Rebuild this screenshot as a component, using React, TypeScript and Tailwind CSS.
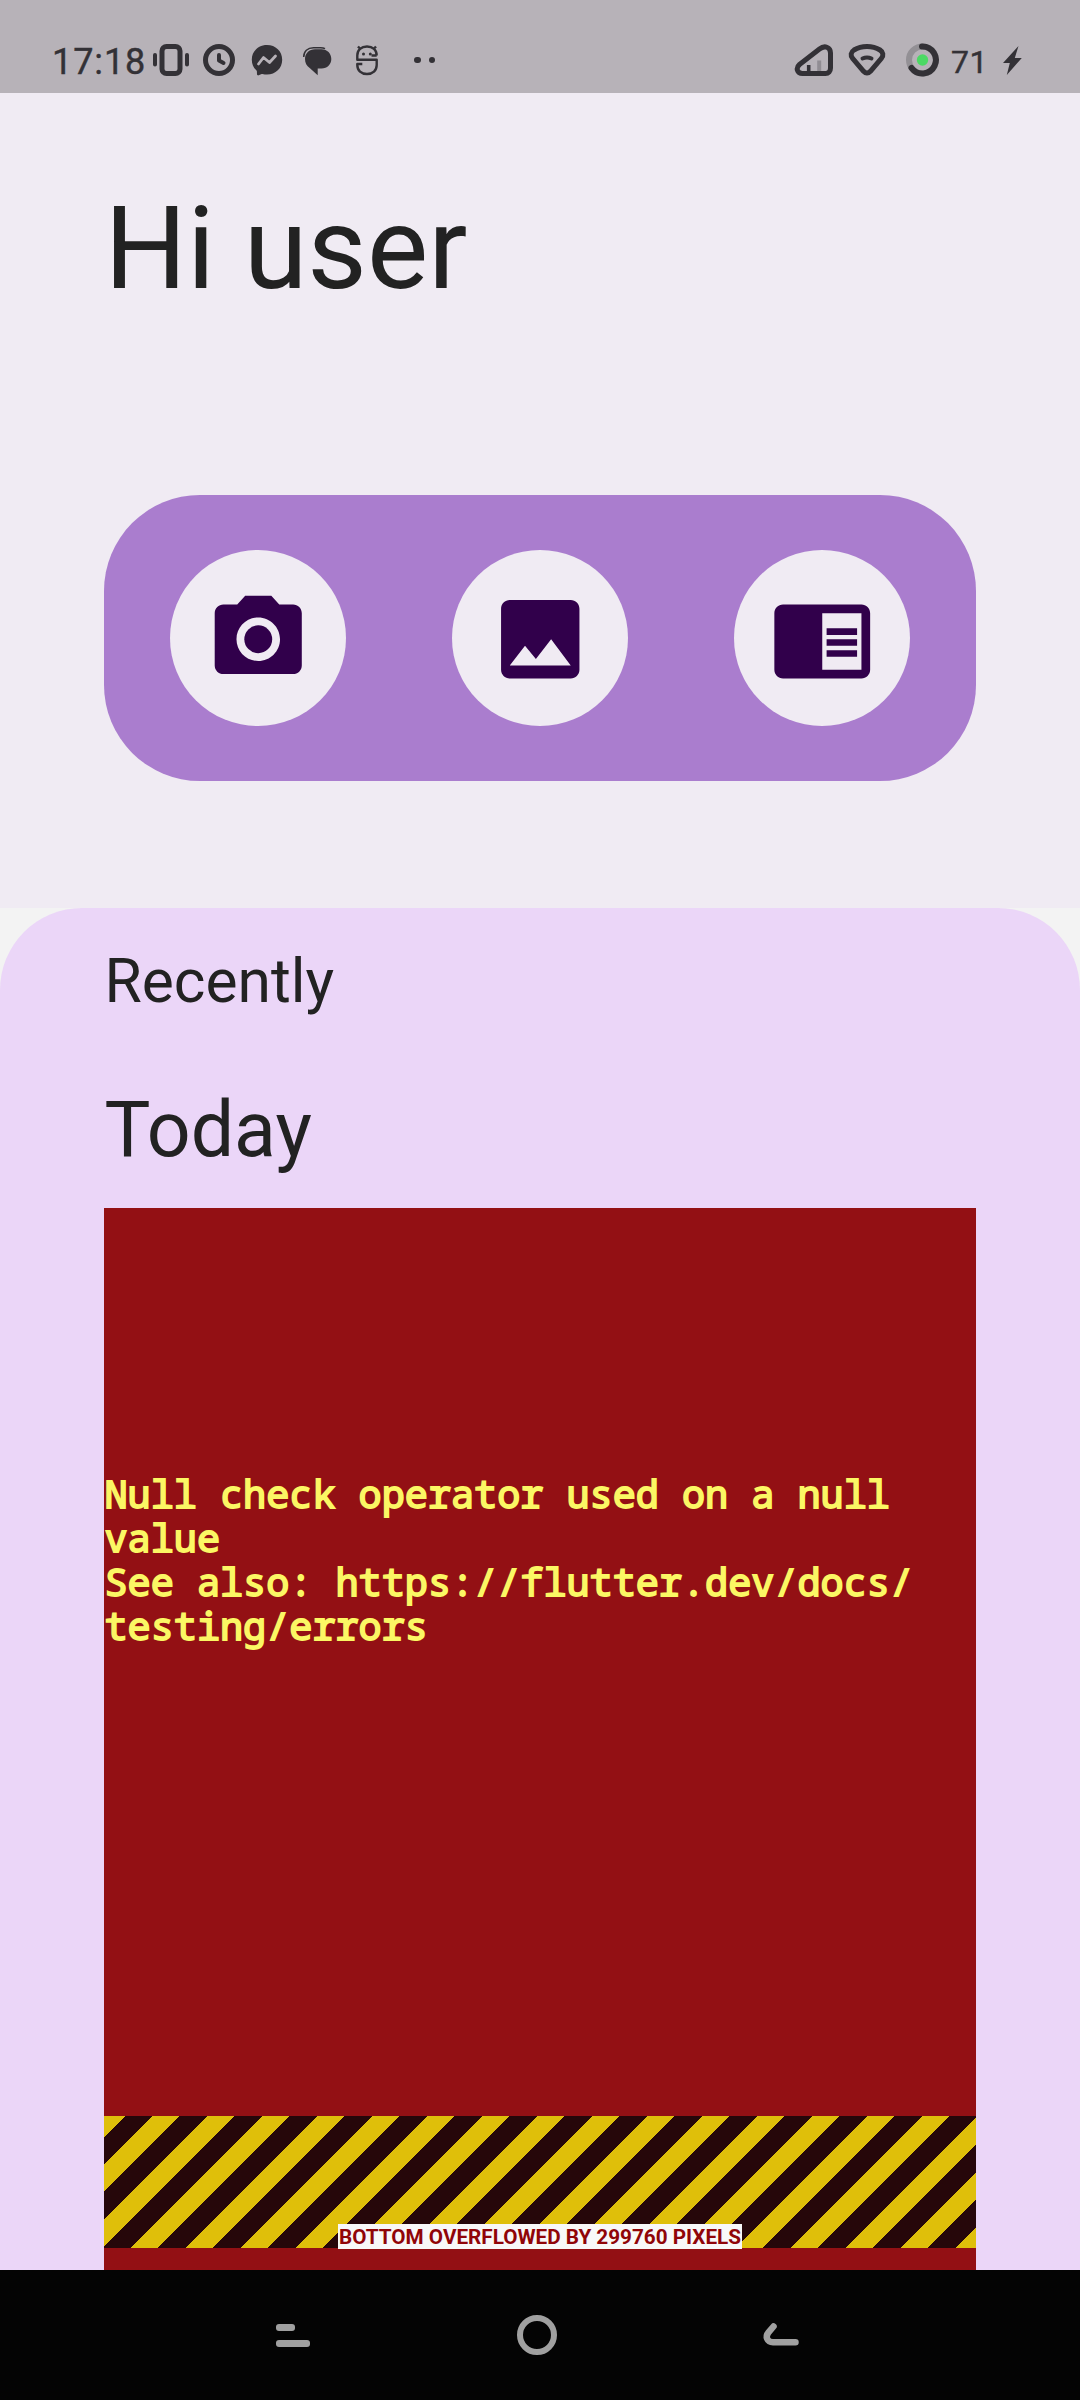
import type { ReactNode } from "react";

const INK = "#333136";

function LeftStatus() {
  return (
    <div className="flex h-[32px] items-center">
      <span className="w-[100px] whitespace-nowrap pt-[4px] text-[36px] font-normal leading-[32px] tracking-[0.900px] text-[#333136] [-webkit-text-stroke:0.400px_#333136]">17:18</span>
      {/* vibrate */}
      <svg className="h-[34px] w-[38px]" viewBox="152 43 38 34" fill="none" stroke={INK} strokeLinecap="round">
        <rect x="162" y="46.500" width="18" height="27" rx="4.500" strokeWidth="5" />
        <path d="M155 55v9.500M187 55v9.500" strokeWidth="4" />
      </svg>
      {/* clock */}
      <svg className="ml-[12px] h-[34px] w-[34px]" viewBox="202 43 34 34" fill="none" stroke={INK} strokeLinecap="round" strokeLinejoin="round">
        <circle cx="219" cy="60" r="13.500" strokeWidth="5" />
        <path d="M219 55v5.500l4.500 2.500" strokeWidth="4" />
      </svg>
      {/* messenger */}
      <svg className="ml-[15px] h-[34px] w-[32px]" viewBox="251 43 32 34">
        <path fill={INK} d="M267 45c-8.600 0-15.200 6.300-15.200 14.700 0 4.400 1.800 8.200 4.700 10.800.3.300.4.600.4 1l.1 2.700c0 .9.900 1.400 1.700 1.100l3-1.300c.3-.1.600-.1.800-.1 1.400.4 2.900.6 4.500.6 8.600 0 15.200-6.300 15.200-14.800S275.600 45 267 45z" />
        <path fill="none" stroke="#b7b2b8" strokeWidth="2.800" strokeLinejoin="round" strokeLinecap="round" d="M258.500 64l5-6.500 6 5 6-6.500" />
      </svg>
      {/* chat bubble */}
      <svg className="ml-[19px] h-[34px] w-[32px]" viewBox="302 43 32 34">
        <path fill={INK} d="M315 49.200h6.500c5.800 0 9.800 4.400 9.800 9.700s-4 9.500-9.800 9.500h-3.800v6.800l-8-7.300c-3-2-4.700-5-4.700-9 0-5.600 4.200-9.700 10-9.700z" />
        <path fill="none" stroke={INK} strokeWidth="1.500" d="M303.700 57c0-5.500 3.800-9.300 9.800-9.300h7c2 0 3.200.2 4.500 1" />
      </svg>
      {/* bugdroid S */}
      <svg className="ml-[21px] h-[34px] w-[24px]" viewBox="355 43 24 34" fill="none" stroke={INK} strokeWidth="2.400" strokeLinejoin="round">
        <path d="M376.700 55.500c0-5.500-4-9-9.700-9s-9.700 3.500-9.700 9v4.300h19.400v5.200c0 5.500-4 9-9.700 9s-9.700-3.500-9.700-9v-1h5M358 46.500l3 3.300M376 46.500l-3 3.300M371.500 55.500h5.200" />
        <circle cx="363.500" cy="54" r="1.500" fill={INK} stroke="none" />
        <circle cx="370.300" cy="54" r="1.500" fill={INK} stroke="none" />
      </svg>
      <div className="ml-[35px] flex gap-[8px]">
        <i className="size-[6.500px] rounded-full bg-[#333136]" />
        <i className="size-[6.500px] rounded-full bg-[#333136]" />
      </div>
    </div>
  );
}

function RightStatus() {
  return (
    <div className="flex h-[32px] items-center">
      {/* mobile signal */}
      <svg className="h-[34px] w-[40px]" viewBox="794 43 40 34" fill="none" strokeLinecap="round" strokeLinejoin="round">
        <path stroke={INK} strokeWidth="5" d="M799.500 64.500l20-15.500c5-4 11-2 11 4v15c0 3.500-2 5.500-5 5.500h-23c-5.500 0-7-5.500-3-9z" />
        <path stroke={INK} strokeWidth="3.600" strokeLinecap="butt" d="M808.700 65v9" />
        <path stroke="#918d93" strokeWidth="4" strokeLinecap="butt" d="M819.200 60.500V71" />
      </svg>
      {/* wifi */}
      <svg className="ml-[14px] h-[34px] w-[38px]" viewBox="848 43 38 34" fill="none" stroke={INK} strokeLinecap="round" strokeLinejoin="round">
        <path strokeWidth="5" d="M854 50c7.500-4.600 18.500-4.600 26 0 3.200 2 3.800 5.500 1.400 8.300l-11 13c-2.200 2.400-4.600 2.400-6.800 0l-11-13C850.200 55.500 850.800 52 854 50z" />
        <path strokeWidth="4" d="M862.500 58.500c3-1.400 6-1.400 9 0" />
      </svg>
      {/* battery ring */}
      <svg className="ml-[19px] h-[34px] w-[35px]" viewBox="905 43 35 34" fill="none">
        <circle cx="922.500" cy="60" r="13.500" stroke="#939095" strokeWidth="6" />
        <path stroke={INK} strokeWidth="6" strokeLinecap="round" d="M922 46.500a13.500 13.500 0 1 1-10.500 21.500" />
        <circle cx="922.500" cy="60" r="5.700" fill="#4cd964" />
      </svg>
      <span className="ml-[11px] w-[51px] whitespace-nowrap pt-[3px] text-[32px] leading-[32px] tracking-[0.600px] text-[#333136] [-webkit-text-stroke:0.400px_#333136]">71</span>
      <svg className="h-[34px] w-[20px]" viewBox="1002 43 20 34">
        <path fill={INK} d="M1018.500 46l-15.500 17h6.800l-3 12 15-17h-7z" />
      </svg>
    </div>
  );
}

function ActionButton({ children }: { children: ReactNode }) {
  return (
    <button className="flex size-[176px] items-center justify-center rounded-full bg-[#f0ebf3]">
      <svg className="ml-[1px] mt-[2px] size-[104.500px]" viewBox="0 0 24 24" fill="#31004b">
        {children}
      </svg>
    </button>
  );
}

export default function App() {
  return (
    <div className="flex h-[2400px] w-[1080px] flex-col overflow-hidden bg-[#f3f3f3] font-['Roboto',sans-serif] text-[#222222]">
      <header className="flex h-[93px] shrink-0 items-start justify-between bg-[#b7b2b8] pl-[52px] pr-[58px] pt-[44px]">
        <LeftStatus />
        <RightStatus />
      </header>

      <section className="flex h-[815px] shrink-0 flex-col bg-[#f0ebf3] px-[104px] pt-[88px]">
        <h1 className="h-[136px] pl-[0.500px] text-[115.500px] leading-[136px]">Hi user</h1>
        <div className="mt-[178px] flex h-[286px] items-center justify-between rounded-[96px] bg-[#aa7dce] pl-[66px] pr-[66.500px]">
          <ActionButton>
            <circle cx="12" cy="12" r="3.200" />
            <path d="M9 2 7.170 4H4c-1.100 0-2 .9-2 2v12c0 1.100.9 2 2 2h16c1.100 0 2-.9 2-2V6c0-1.100-.9-2-2-2h-3.170L15 2H9zm3 15c-2.760 0-5-2.240-5-5s2.240-5 5-5 5 2.240 5 5-2.240 5-5 5z" />
          </ActionButton>
          <ActionButton>
            <path d="M21 19V5c0-1.100-.9-2-2-2H5c-1.100 0-2 .9-2 2v14c0 1.100.9 2 2 2h14c1.100 0 2-.9 2-2zM5 18l3.500-4.500 2.500 3.010L14.500 12l4.500 6z" />
          </ActionButton>
          <ActionButton>
            <path d="M13 12h7v1.500h-7zm0-2.500h7V11h-7zm0 5h7V16h-7zM21 4H3c-1.100 0-2 .9-2 2v13c0 1.100.9 2 2 2h18c1.100 0 2-.9 2-2V6c0-1.100-.9-2-2-2zm0 15h-9V6h9v13z" />
          </ActionButton>
        </div>
      </section>

      <section className="flex h-[1362px] shrink-0 flex-col rounded-t-[82px] bg-[#ebd6f8] px-[104px]">
        <h2 className="mt-[38px] h-[72px] pl-[0.500px] text-[60.500px] leading-[72px]">Recently</h2>
        <h3 className="mt-[67px] h-[90px] pl-[0.500px] text-[77px] leading-[90px]">Today</h3>
        <div className="mt-[32.500px] flex flex-1 flex-col bg-[#931014]">
          <p className="mt-[263.500px] h-[176px] whitespace-pre pl-[0.500px] font-['Noto_Sans_Mono','DejaVu_Sans_Mono',monospace] text-[38.500px] leading-[44px] text-[#fbf764] [-webkit-text-stroke:1.800px_#fbf764]">
            {"Null check operator used on a null\nvalue\nSee also: https://flutter.dev/docs/\ntesting/errors"}
          </p>
          <div className="mt-[469px] flex h-[132px] items-end justify-center bg-[repeating-linear-gradient(135deg,#dfbf0a_0px,#dfbf0a_14.850px,#26070a_14.850px,#26070a_34.300px,#dfbf0a_34.300px,#dfbf0a_38.890px)]">
            <span className="-mb-[1px] h-[25px] whitespace-nowrap bg-[#f8f8f8] px-[0.700px] pt-[1px] text-[20.700px] font-bold leading-[24px] text-[#900508]">
              BOTTOM OVERFLOWED BY 299760 PIXELS
            </span>
          </div>
        </div>
      </section>

      <nav className="flex h-[130px] shrink-0 items-center bg-[#040404] pl-[276px]">
        <div className="flex flex-col gap-[9px]">
          <i className="h-[7px] w-[19px] rounded-[3px] bg-[#a0a0a0]" />
          <i className="h-[7px] w-[34px] rounded-[3px] bg-[#a0a0a0]" />
        </div>
        <i className="ml-[207px] size-[40px] rounded-full border-[6.500px] border-[#a0a0a0]" />
        <svg className="ml-[205px] mt-[-3px] h-[26px] w-[38px]" viewBox="762 2320 38 26" fill="none" stroke="#a0a0a0" strokeWidth="6.500" strokeLinecap="round" strokeLinejoin="round">
          <path d="M773.500 2325.500l-5 5.800c-3.500 4.200-1.500 10 4.500 10h22.500" />
        </svg>
      </nav>
    </div>
  );
}
